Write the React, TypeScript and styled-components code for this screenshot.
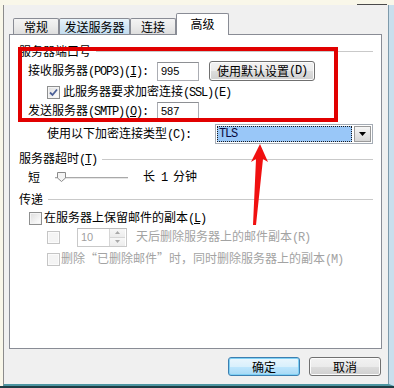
import React from 'react';
import styled, { createGlobalStyle, css } from 'styled-components';

const Global = createGlobalStyle`
  html, body { margin: 0; padding: 0; background: #f9f7e9; }
  body { font-family: "Noto Sans CJK SC", "Noto Sans", sans-serif; font-size: 12px; color: #000; }
  #root { width: 394px; height: 388px; }
`;

const Screen = styled.div`
  position: relative;
  width: 394px;
  height: 388px;
  overflow: hidden;
  background: #f9f7e9;
  display: flex;
  flex-direction: column;
`;

const TopStrip = styled.div`
  height: 5px;
  display: flex;
  justify-content: flex-end;
  align-items: flex-end;
  padding-right: 7px;
`;

const TopMark = styled.div`
  width: 30px;
  height: 1px;
  background: #4a4a4a;
`;

const Window = styled.div`
  box-sizing: border-box;
  margin-left: 3px;
  width: 391px;
  height: 381px;
  background: #f0f0f0;
  border-left: 1px solid #8c8c8c;
  border-right: 5px solid #c9dfed;
  border-bottom: 2px solid #4c95a1;
  box-shadow: inset -1px 0 0 #7e9aab;
  display: flex;
  flex-direction: column;
`;

const BottomEdge = styled.div`
  height: 2px;
  background: #1e3d44;
`;

const TabBar = styled.div`
  margin-top: 8px;
  height: 21px;
  padding-left: 9px;
  display: flex;
  align-items: flex-end;
`;

const Tab = styled.div<{ $w: number; $hover?: boolean }>`
  box-sizing: border-box;
  width: ${(p) => p.$w}px;
  height: 16px;
  border: 1px solid #898c95;
  border-bottom: none;
  border-radius: 2px 2px 0 0;
  display: flex;
  align-items: center;
  justify-content: center;
  font-size: 12px;
  line-height: 14px;
  background: ${(p) =>
    p.$hover
      ? 'linear-gradient(#e9f4fb, #d3e6f4 50%, #c4ddef)'
      : 'linear-gradient(#f4f4f4, #ebebeb 50%, #dedede)'};
`;

const ActiveTab = styled.div`
  position: relative;
  z-index: 2;
  box-sizing: border-box;
  width: 53px;
  height: 22px;
  margin-bottom: -1px;
  border: 1px solid #898c95;
  border-bottom: none;
  border-radius: 2px 2px 0 0;
  background: #fff;
  display: flex;
  align-items: center;
  justify-content: center;
  padding-bottom: 2px;
  font-size: 12px;
`;

const Panel = styled.div`
  box-sizing: border-box;
  margin-left: 5px;
  width: 373px;
  height: 315px;
  border: 1px solid #898c95;
  background: #fff;
  padding-right: 8px;
  display: flex;
  flex-direction: column;
`;

const Row = styled.div<{ $h: number; $mt: number; $indent: number }>`
  height: ${(p) => p.$h}px;
  margin-top: ${(p) => p.$mt}px;
  padding-left: ${(p) => p.$indent}px;
  display: flex;
  align-items: center;
  white-space: pre;
  line-height: 16px;
`;

const GroupTitle = styled.span`
  flex: none;
`;

const GroupLine = styled.div`
  flex: 1;
  height: 1px;
  margin-left: 5px;
  background: #c9c9c9;
`;

const Hw = styled.span<{ $navy?: boolean }>`
  font-family: "Liberation Mono", monospace;
  font-size: 12px;
  letter-spacing: -1.2px;
  ${(p) => p.$navy && css`color: #0a0a40;`}
`;

const U = styled.span`
  text-decoration: underline;
  text-underline-offset: 1px;
`;

const Label = styled.span<{ $w?: number; $disabled?: boolean }>`
  flex: none;
  ${(p) => p.$w !== undefined && css`width: ${p.$w}px;`}
  color: ${(p) => (p.$disabled ? '#a3a3a3' : '#000')};
`;

const TextBox = styled.div<{ $w: number; $disabled?: boolean }>`
  box-sizing: border-box;
  flex: none;
  width: ${(p) => p.$w}px;
  height: 19px;
  border: 1px solid ${(p) => (p.$disabled ? '#c9c9c9' : '#abadb3')};
  border-top-color: ${(p) => (p.$disabled ? '#bdbdbd' : '#8e9094')};
  background: #fff;
  display: flex;
  align-items: center;
  padding-left: 3px;
  font-family: "Liberation Sans", Arial, sans-serif;
  font-size: 11px;
  color: ${(p) => (p.$disabled ? '#a0a0a0' : '#000')};
`;

const SpinButtons = styled.div`
  margin-left: auto;
  width: 15px;
  height: 100%;
  display: flex;
  flex-direction: column;
  border-left: 1px solid #d6d6d6;
`;

const SpinHalf = styled.div`
  flex: 1;
  display: flex;
  align-items: center;
  justify-content: center;
  background: linear-gradient(#f7f7f7, #ececec);
  & + & { border-top: 1px solid #d6d6d6; }
`;

const Button = styled.div<{ $w: number; $default?: boolean }>`
  box-sizing: border-box;
  flex: none;
  width: ${(p) => p.$w}px;
  height: ${(p) => (p.$default !== undefined ? 19 : 20)}px;
  border: 1px solid ${(p) => (p.$default ? '#3c7fb1' : '#707070')};
  border-radius: 3px;
  background: ${(p) =>
    p.$default
      ? 'linear-gradient(#eaf6fd, #d9f0fc 50%, #bee6fd 51%, #a7d9f5)'
      : 'linear-gradient(#f2f2f2, #ebebeb 50%, #dddddd 51%, #cfcfcf)'};
  box-shadow: inset 0 0 0 1px ${(p) => (p.$default ? '#7fd0f4' : '#fcfcfc')};
  display: flex;
  align-items: center;
  justify-content: center;
  font-size: 12px;
`;

const Check = styled.span<{ $disabled?: boolean }>`
  box-sizing: border-box;
  flex: none;
  width: 13px;
  height: 13px;
  border: 1px solid ${(p) => (p.$disabled ? '#c5c5c5' : '#8e8f8f')};
  background: ${(p) =>
    p.$disabled ? '#f4f4f4' : 'linear-gradient(135deg, #dcdcdc, #f6f6f6 70%, #fff)'};
  box-shadow: inset 0 0 0 1px ${(p) => (p.$disabled ? '#fbfbfb' : '#f4f4f4')};
  display: flex;
  align-items: center;
  justify-content: center;
`;

const Select = styled.div`
  box-sizing: border-box;
  flex: none;
  width: 158px;
  height: 20px;
  border: 1px solid #a5acb5;
  background: #fff;
  display: flex;
  align-items: stretch;
  padding: 1px;
`;

const SelectValue = styled.div`
  flex: 1;
  background: #99c7f8;
  outline: 1px dotted #1a1a1a;
  outline-offset: -1px;
  display: flex;
  align-items: center;
  padding-left: 2px;
`;

const DropButton = styled.div`
  box-sizing: border-box;
  width: 17px;
  margin-left: 2px;
  border: 1px solid #9a9a9a;
  background: linear-gradient(#f6f6f6, #e6e6e6 50%, #d6d6d6);
  display: flex;
  align-items: center;
  justify-content: center;
`;

const SliderBox = styled.div`
  position: relative;
  flex: none;
  width: 73px;
  height: 16px;
  display: flex;
  align-items: center;
`;

const Track = styled.div`
  width: 100%;
  height: 1px;
  background: #a9a9a9;
  box-shadow: 0 1px 0 #e6e6e6;
`;

const Thumb = styled.svg`
  position: absolute;
  left: 2px;
  top: 3px;
`;

const ButtonRow = styled.div`
  margin-top: 8px;
  margin-left: 5px;
  width: 373px;
  padding-right: 1px;
  box-sizing: border-box;
  display: flex;
  justify-content: flex-end;
  gap: 9px;
`;

const Highlight = styled.div`
  position: absolute;
  left: 18px;
  top: 47px;
  width: 320px;
  height: 75px;
  box-sizing: border-box;
  border: 4px solid #e10000;
  pointer-events: none;
`;

const ArrowSvg = styled.svg`
  position: absolute;
  left: 0;
  top: 0;
  pointer-events: none;
`;

function CheckMark() {
  return (
    <svg width="9" height="9" viewBox="0 0 9 9">
      <path d="M1 4.5 L3.5 7 L8 1.5" fill="none" stroke="#4a5f97" strokeWidth="1.8" />
    </svg>
  );
}

export default function App() {
  return (
    <>
      <Global />
      <Screen>
        <TopStrip>
          <TopMark />
        </TopStrip>
        <Window>
          <TabBar>
            <Tab $w={46}>常规</Tab>
            <Tab $w={71} $hover>发送服务器</Tab>
            <Tab $w={46}>连接</Tab>
            <ActiveTab>高级</ActiveTab>
          </TabBar>
          <Panel>
            <Row $h={16} $mt={8} $indent={9}>
              <GroupTitle>服务器端口号</GroupTitle>
              <GroupLine />
            </Row>
            <Row $h={20} $mt={2} $indent={18}>
              <Label $w={129}>
                接收服务器<Hw>(POP3)(<U>I</U>):</Hw>
              </Label>
              <TextBox $w={42}>995</TextBox>
              <Button $w={106} style={{ marginLeft: 10 }}>
                使用默认设置<Hw>(D)</Hw>
              </Button>
            </Row>
            <Row $h={16} $mt={3} $indent={37}>
              <Check>
                <CheckMark />
              </Check>
              <Label style={{ marginLeft: 3 }}>
                此服务器要求加密连接<Hw>(SSL)(E)</Hw>
              </Label>
            </Row>
            <Row $h={20} $mt={1} $indent={18}>
              <Label $w={129}>
                发送服务器<Hw>(SMTP)(<U>O</U>):</Hw>
              </Label>
              <TextBox $w={42}>587</TextBox>
            </Row>
            <Row $h={20} $mt={3} $indent={37}>
              <Label $w={168}>
                使用以下加密连接类型<Hw>(C):</Hw>
              </Label>
              <Select>
                <SelectValue>
                  <Hw $navy>TLS</Hw>
                </SelectValue>
                <DropButton>
                  <svg width="7" height="4" viewBox="0 0 7 4">
                    <path d="M0 0 H7 L3.5 4 Z" fill="#000" />
                  </svg>
                </DropButton>
              </Select>
            </Row>
            <Row $h={16} $mt={7} $indent={9}>
              <GroupTitle>
                服务器超时<Hw>(<U>T</U>)</Hw>
              </GroupTitle>
              <GroupLine />
            </Row>
            <Row $h={16} $mt={2} $indent={18}>
              <Label $w={27}>短</Label>
              <SliderBox>
                <Track />
                <Thumb width="9" height="10" viewBox="0 0 9 10">
                  <path d="M0.5 0.5 H8.5 V6 L4.5 9.5 L0.5 6 Z" fill="#f4f4f4" stroke="#8a8a8a" />
                </Thumb>
              </SliderBox>
              <Label style={{ marginLeft: 15 }}>
                长<Hw>{' 1 '}</Hw>分钟
              </Label>
            </Row>
            <Row $h={16} $mt={6} $indent={9}>
              <GroupTitle>传递</GroupTitle>
              <GroupLine />
            </Row>
            <Row $h={16} $mt={3} $indent={19}>
              <Check />
              <Label style={{ marginLeft: 2 }}>
                在服务器上保留邮件的副本<Hw>(<U>L</U>)</Hw>
              </Label>
            </Row>
            <Row $h={20} $mt={1} $indent={37}>
              <Check $disabled />
              <TextBox $w={50} $disabled style={{ marginLeft: 17, paddingRight: 1 }}>
                10
                <SpinButtons>
                  <SpinHalf>
                    <svg width="5" height="3" viewBox="0 0 5 3">
                      <path d="M0 3 H5 L2.5 0 Z" fill="#a8a8a8" />
                    </svg>
                  </SpinHalf>
                  <SpinHalf>
                    <svg width="5" height="3" viewBox="0 0 5 3">
                      <path d="M0 0 H5 L2.5 3 Z" fill="#a8a8a8" />
                    </svg>
                  </SpinHalf>
                </SpinButtons>
              </TextBox>
              <Label $disabled style={{ marginLeft: 9 }}>
                天后删除服务器上的邮件副本<Hw>(R)</Hw>
              </Label>
            </Row>
            <Row $h={16} $mt={4} $indent={37}>
              <Check $disabled />
              <Label $disabled style={{ marginLeft: 1 }}>
                删除“已删除邮件”时，同时删除服务器上的副本<Hw>(M)</Hw>
              </Label>
            </Row>
          </Panel>
          <ButtonRow>
            <Button $w={72} $default>确定</Button>
            <Button $w={72} $default={false}>取消</Button>
          </ButtonRow>
        </Window>
        <BottomEdge />
        <Highlight />
        <ArrowSvg width="394" height="388" viewBox="0 0 394 388">
          <polygon
            points="260,144 268,162 263,159 256,225 253,225 256,159 251,162"
            fill="#f01010"
          />
        </ArrowSvg>
      </Screen>
    </>
  );
}
